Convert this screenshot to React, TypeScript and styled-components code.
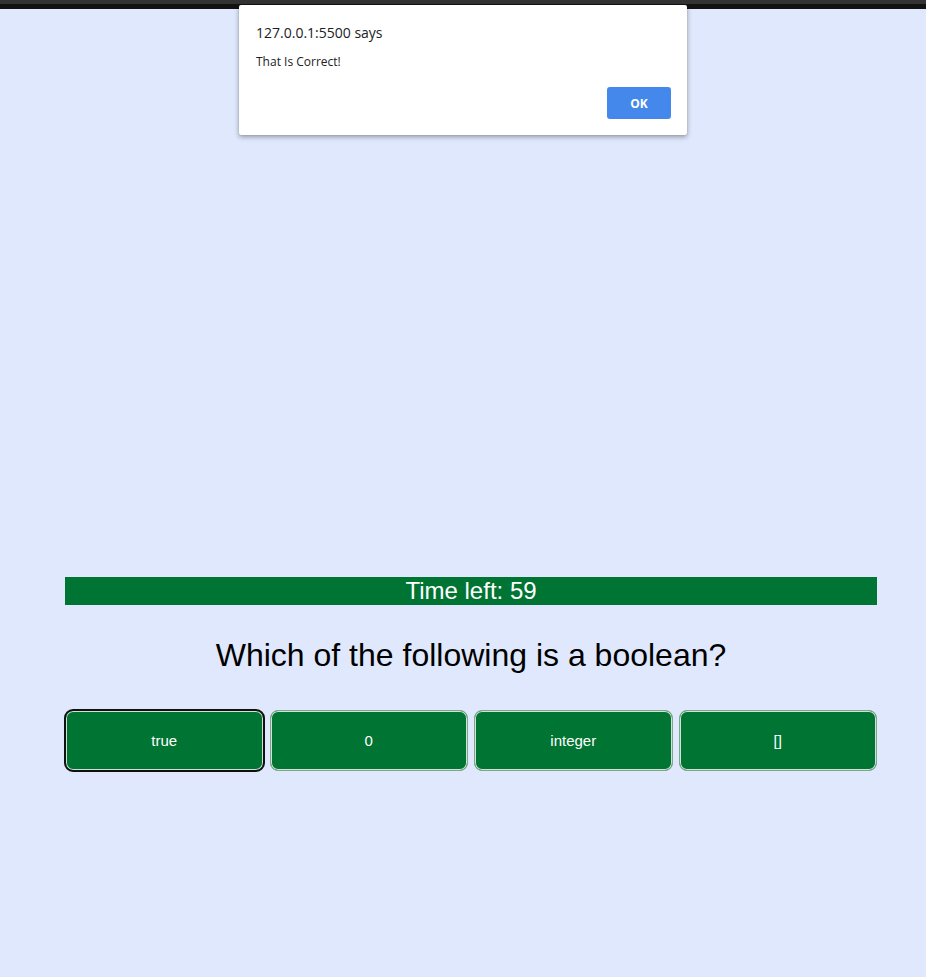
import React from "react";
import styled, { createGlobalStyle } from "styled-components";

const GlobalStyle = createGlobalStyle`
  html, body {
    margin: 0;
    padding: 0;
    background: #dfe8fc;
  }
  body {
    font-family: "Liberation Sans", Arial, sans-serif;
    min-height: 977px;
  }
`;

const Page = styled.div`
  position: relative;
  min-height: 977px;
  background: #dfe8fc;
`;

const BrowserEdge = styled.div`
  height: 9px;
  background: linear-gradient(#333333 0 4px, #121212 4px 9px);
`;

const Quiz = styled.main`
  display: flex;
  flex-direction: column;
  width: 812px;
  padding: 568px 0 0 65px;
`;

const TimerBar = styled.div`
  height: 28px;
  background: #007432;
  color: #ffffff;
  font-size: 24px;
  line-height: 28px;
  text-align: center;
`;

const Question = styled.h2`
  margin: 32px 0 36px;
  font-size: 32px;
  font-weight: 400;
  line-height: 37px;
  color: #000000;
  text-align: center;
`;

const Choices = styled.div`
  display: grid;
  grid-template-columns: repeat(4, 1fr);
  gap: 6px;
`;

const Choice = styled.button<{ $focused?: boolean }>`
  height: 61px;
  background: #007432;
  color: #ffffff;
  font-family: "Liberation Sans", Arial, sans-serif;
  font-size: 15px;
  border: 1px solid #7fa58b;
  box-shadow: inset 0 0 0 1px #cfe3d5;
  border-radius: 8px;
  padding: 0;
  cursor: pointer;
  outline: ${(p) => (p.$focused ? "2px solid #111111" : "none")};
  outline-offset: -1px;
`;

const Dialog = styled.div`
  position: absolute;
  left: 239px;
  top: 5px;
  width: 448px;
  height: 130px;
  box-sizing: border-box;
  background: #ffffff;
  border-radius: 2px;
  box-shadow: 0 2px 5px rgba(0, 0, 0, 0.35), 0 0 1px rgba(0, 0, 0, 0.3);
  padding: 19px 16px 16px 17px;
  display: flex;
  flex-direction: column;
  font-family: "Open Sans", "Noto Sans", sans-serif;
  color: #202124;
`;

const DialogTitle = styled.div`
  font-size: 14px;
  line-height: 18px;
`;

const DialogMessage = styled.div`
  margin-top: 12px;
  font-size: 12px;
  line-height: 16px;
`;

const DialogActions = styled.div`
  margin-top: auto;
  display: flex;
  justify-content: flex-end;
`;

const OkButton = styled.button`
  width: 64px;
  height: 32px;
  background: #4388ea;
  color: #ffffff;
  border: none;
  border-radius: 3px;
  font-family: "Open Sans", "Noto Sans", sans-serif;
  font-weight: 700;
  font-size: 12px;
  cursor: pointer;
`;

const answers = ["true", "0", "integer", "[]"];

export default function App() {
  return (
    <>
      <GlobalStyle />
      <Page>
        <BrowserEdge />
        <Quiz>
          <TimerBar>Time left: 59</TimerBar>
          <Question>Which of the following is a boolean?</Question>
          <Choices>
            {answers.map((a, i) => (
              <Choice key={a} $focused={i === 0}>
                {a}
              </Choice>
            ))}
          </Choices>
        </Quiz>
        <Dialog role="alertdialog">
          <DialogTitle>127.0.0.1:5500 says</DialogTitle>
          <DialogMessage>That Is Correct!</DialogMessage>
          <DialogActions>
            <OkButton>OK</OkButton>
          </DialogActions>
        </Dialog>
      </Page>
    </>
  );
}
